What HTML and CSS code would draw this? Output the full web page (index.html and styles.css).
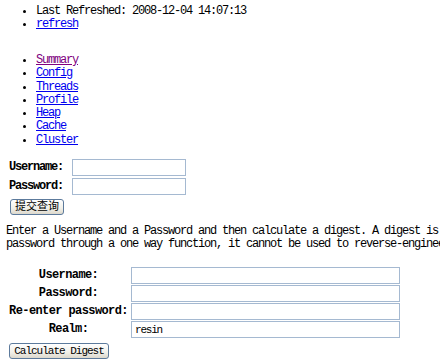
FILE: index.html
```html
<!DOCTYPE html>
<html>
<head>
  <meta charset="UTF-8" />
  <title>Resin Admin</title>
  <link rel="stylesheet" href="styles.css">
</head>
<body>
  <ul class="status">
    <li>Last Refreshed: 2008-12-04 14:07:13</li>
    <li><a href="#">refresh</a></li>
  </ul>

  <ul class="nav">
    <li><a class="visited" href="#">Summary</a></li>
    <li><a href="#">Config</a></li>
    <li><a href="#">Threads</a></li>
    <li><a href="#">Profile</a></li>
    <li><a href="#">Heap</a></li>
    <li><a href="#">Cache</a></li>
    <li><a href="#">Cluster</a></li>
  </ul>

  <!-- login -->
  <form class="login">
    <table class="login-table">
      <tr>
        <th>Username:</th>
        <td><input type="text" class="small-input"></td>
      </tr>
      <tr>
        <th>Password:</th>
        <td><input type="password" class="small-input"></td>
      </tr>
    </table>
    <button type="button" class="btn btn-cjk">提交查询</button>
  </form>

  <p class="intro">Enter a Username and a Password and then calculate a digest. A digest is the result of running the<br>password through a one way function, it cannot be used to reverse-engineer the password.</p>

  <!-- digest -->
  <form class="digest">
    <table class="digest-table">
      <tr>
        <th>Username:</th>
        <td><input type="text" class="wide-input"></td>
      </tr>
      <tr>
        <th>Password:</th>
        <td><input type="password" class="wide-input"></td>
      </tr>
      <tr>
        <th>Re-enter password:</th>
        <td><input type="password" class="wide-input"></td>
      </tr>
      <tr>
        <th>Realm:</th>
        <td><input type="text" class="wide-input" value="resin"></td>
      </tr>
    </table>
    <button type="button" class="btn">Calculate Digest</button>
  </form>
</body>
</html>
```

FILE: styles.css
```css
* {
  box-sizing: border-box;
}

html, body {
  margin: 0;
  padding: 0;
  overflow: hidden;
  background: #fff;
}

body {
  font-family: "Liberation Mono", "Noto Sans CJK SC", monospace;
  font-size: 12px;
  letter-spacing: -1.2px;
  line-height: 13px;
  color: #000;
}

a {
  color: #0000ee;
}

a.visited {
  color: #800080;
}

ul {
  margin: 0;
  padding-left: 36px;
}

.status {
  margin-top: 5px;
}

.nav {
  margin-top: 23px;
}

.nav li {
  line-height: 13.3px;
}

/* login */
.login {
  margin-top: 10px;
  padding-left: 6px;
}

table {
  border-collapse: separate;
  border-spacing: 2px;
}

th {
  font-weight: bold;
  padding: 0 1px;
}

td {
  padding: 0;
}

.login-table th {
  text-align: left;
  padding-right: 7px;
}

input {
  display: block;
  height: 17px;
  margin: 0;
  padding: 1px 3px;
  border: 1px solid #a5b9d1;
  font-family: "Liberation Mono", monospace;
  font-size: 11px;
  letter-spacing: -1.2px;
  background: #fff;
}

.small-input {
  width: 114px;
}

.wide-input {
  width: 269px;
}

.btn {
  display: block;
  margin: 2px 0 0 3px;
  height: 16px;
  padding: 0 2px;
  border: 1px solid #5c7a9c;
  border-radius: 3px;
  background: linear-gradient(#ffffff, #f0efe8 60%, #dcd8cc);
  font-family: "Liberation Mono", "Noto Sans CJK SC", monospace;
  font-size: 11px;
  letter-spacing: -1px;
  line-height: 14px;
  white-space: nowrap;
  color: #000;
}

.btn-cjk {
  margin-left: 4px;
  width: 54px;
  font-size: 11px;
  letter-spacing: 0;
}

.intro {
  margin: 10px 0 0 6px;
  white-space: nowrap;
}

/* digest */
.digest {
  margin-top: 15px;
  padding-left: 6px;
}

.digest-table {
  border-spacing: 0 1px;
}

.digest-table th {
  text-align: center;
  width: 125px;
  padding: 0;
  letter-spacing: -0.6px;
}

.digest-table td {
  padding: 0;
}

.digest .btn {
  margin: 4px 0 0 3px;
  width: 100px;
}
```
